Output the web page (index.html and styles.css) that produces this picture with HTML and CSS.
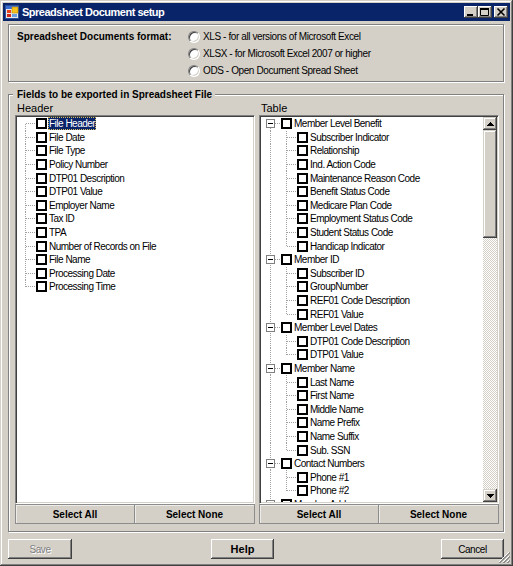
FILE: index.html
```html
<!DOCTYPE html>
<html>
<head>
<meta charset="utf-8">
<title>Spreadsheet Document setup</title>
<link rel="stylesheet" href="styles.css">
</head>
<body>
<div class="window">
  <div class="titlebar">
    <svg class="app-icon" width="14" height="14" viewBox="0 0 14 14">
      <rect x="0.5" y="0.5" width="13" height="13" fill="#e8e8e8" stroke="#2a4f9c"/>
      <rect x="1" y="1" width="12" height="3" fill="#3b6fd1"/>
      <rect x="7" y="2" width="6" height="6" fill="#f6c21b" stroke="#c08a00" stroke-width="0.6"/>
      <rect x="2" y="5" width="4" height="3" fill="#e8401c"/>
      <rect x="2" y="9" width="4" height="3" fill="#d0281a"/>
      <rect x="7" y="9" width="5" height="3" fill="#6aa0e0"/>
    </svg>
    <span class="title">Spreadsheet Document setup</span>
    <div class="caption-btns">
      <span class="cbtn"><svg width="14" height="12" viewBox="0 0 14 12"><rect x="3" y="8" width="6" height="2" fill="#000"/></svg></span>
      <span class="cbtn"><svg width="14" height="12" viewBox="0 0 14 12"><path d="M2.5 2.5h8v7h-8z" fill="none" stroke="#000"/><rect x="2" y="2" width="9" height="2" fill="#000"/></svg></span>
      <span class="cbtn close"><svg width="14" height="12" viewBox="0 0 14 12"><path d="M3.5 2.5L10.5 9.5M10.5 2.5L3.5 9.5" stroke="#000" stroke-width="1.6"/></svg></span>
    </div>
  </div>

  <div class="client">
    <div class="group format">
      <div class="fmt-label">Spreadsheet Documents format:</div>
      <div class="radios">
        <div class="radio-row"><span class="radio"></span><span class="radio-text">XLS - for all versions of Microsoft Excel</span></div>
        <div class="radio-row"><span class="radio"></span><span class="radio-text">XLSX - for Microsoft Excel 2007 or higher</span></div>
        <div class="radio-row"><span class="radio"></span><span class="radio-text">ODS - Open Document Spread Sheet</span></div>
      </div>
    </div>

    <div class="group fields">
      <div class="group-title">Fields to be exported in Spreadsheet File</div>
      <div class="cols">
        <div class="panel">
          <div class="panel-label">Header</div>
          <div class="tree">
            <div class="tree-body htree">
              <div class="node first"><span class="cb"></span><span class="lbl sel">File Header</span></div>
              <div class="node"><span class="cb"></span><span class="lbl">File Date</span></div>
              <div class="node"><span class="cb"></span><span class="lbl">File Type</span></div>
              <div class="node"><span class="cb"></span><span class="lbl">Policy Number</span></div>
              <div class="node"><span class="cb"></span><span class="lbl">DTP01 Description</span></div>
              <div class="node"><span class="cb"></span><span class="lbl">DTP01 Value</span></div>
              <div class="node"><span class="cb"></span><span class="lbl">Employer Name</span></div>
              <div class="node"><span class="cb"></span><span class="lbl">Tax ID</span></div>
              <div class="node"><span class="cb"></span><span class="lbl">TPA</span></div>
              <div class="node"><span class="cb"></span><span class="lbl">Number of Records on File</span></div>
              <div class="node"><span class="cb"></span><span class="lbl">File Name</span></div>
              <div class="node"><span class="cb"></span><span class="lbl">Processing Date</span></div>
              <div class="node last"><span class="cb"></span><span class="lbl">Processing Time</span></div>
            </div>
          </div>
          <div class="tree-actions">
            <button class="flat-btn">Select All</button>
            <button class="flat-btn">Select None</button>
          </div>
        </div>

        <div class="panel">
          <div class="panel-label">Table</div>
          <div class="tree">
            <div class="tree-body">
              <div class="pnode first"><span class="exp"></span><span class="cb"></span><span class="lbl">Member Level Benefit</span></div>
              <div class="cnode"><span class="cb"></span><span class="lbl">Subscriber Indicator</span></div>
              <div class="cnode"><span class="cb"></span><span class="lbl">Relationship</span></div>
              <div class="cnode"><span class="cb"></span><span class="lbl">Ind. Action Code</span></div>
              <div class="cnode"><span class="cb"></span><span class="lbl">Maintenance Reason Code</span></div>
              <div class="cnode"><span class="cb"></span><span class="lbl">Benefit Status Code</span></div>
              <div class="cnode"><span class="cb"></span><span class="lbl">Medicare Plan Code</span></div>
              <div class="cnode"><span class="cb"></span><span class="lbl">Employment Status Code</span></div>
              <div class="cnode"><span class="cb"></span><span class="lbl">Student Status Code</span></div>
              <div class="cnode last"><span class="cb"></span><span class="lbl">Handicap Indicator</span></div>
              <div class="pnode"><span class="exp"></span><span class="cb"></span><span class="lbl">Member ID</span></div>
              <div class="cnode"><span class="cb"></span><span class="lbl">Subscriber ID</span></div>
              <div class="cnode"><span class="cb"></span><span class="lbl">GroupNumber</span></div>
              <div class="cnode"><span class="cb"></span><span class="lbl">REF01 Code Description</span></div>
              <div class="cnode last"><span class="cb"></span><span class="lbl">REF01 Value</span></div>
              <div class="pnode"><span class="exp"></span><span class="cb"></span><span class="lbl">Member Level Dates</span></div>
              <div class="cnode"><span class="cb"></span><span class="lbl">DTP01 Code Description</span></div>
              <div class="cnode last"><span class="cb"></span><span class="lbl">DTP01 Value</span></div>
              <div class="pnode"><span class="exp"></span><span class="cb"></span><span class="lbl">Member Name</span></div>
              <div class="cnode"><span class="cb"></span><span class="lbl">Last Name</span></div>
              <div class="cnode"><span class="cb"></span><span class="lbl">First Name</span></div>
              <div class="cnode"><span class="cb"></span><span class="lbl">Middle Name</span></div>
              <div class="cnode"><span class="cb"></span><span class="lbl">Name Prefix</span></div>
              <div class="cnode"><span class="cb"></span><span class="lbl">Name Suffix</span></div>
              <div class="cnode last"><span class="cb"></span><span class="lbl">Sub. SSN</span></div>
              <div class="pnode"><span class="exp"></span><span class="cb"></span><span class="lbl">Contact Numbers</span></div>
              <div class="cnode"><span class="cb"></span><span class="lbl">Phone #1</span></div>
              <div class="cnode last"><span class="cb"></span><span class="lbl">Phone #2</span></div>
              <div class="pnode"><span class="exp"></span><span class="cb"></span><span class="lbl">Member Address</span></div>
            </div>
            <div class="scrollbar">
              <span class="sb-btn"><svg width="7" height="4" viewBox="0 0 7 4"><path d="M3 0h1v1h1v1h1v1h1v1H0V3h1V2h1V1h1z" fill="#000"/></svg></span>
              <span class="sb-thumb"></span>
              <span class="sb-track"></span>
              <span class="sb-btn"><svg width="7" height="4" viewBox="0 0 7 4"><path d="M0 0h7v1H6v1H5v1H4v1H3V3H2V2H1V1H0z" fill="#000"/></svg></span>
            </div>
          </div>
          <div class="tree-actions">
            <button class="flat-btn">Select All</button>
            <button class="flat-btn">Select None</button>
          </div>
        </div>
      </div>
    </div>

    <div class="footer">
      <button class="btn disabled">Save</button>
      <button class="btn help">Help</button>
      <button class="btn cancel">Cancel</button>
    </div>
  </div>

  <svg class="grip" width="12" height="12" viewBox="0 0 12 12">
    <path d="M11 1L1 11M11 5L5 11M11 9L9 11" stroke="#fff" stroke-width="1"/>
    <path d="M12 1L1 12M12 2L2 12M12 5L5 12M12 6L6 12M12 9L9 12M12 10L10 12" stroke="#808080" stroke-width="0.8"/>
  </svg>
</div>
</body>
</html>
```

FILE: styles.css
```css
:root {
  --face: #d4d0c8;
  --vdot: repeating-linear-gradient(to bottom, #a0a0a0 0 1px, transparent 1px 2px);
  --hdot: repeating-linear-gradient(to right, #a0a0a0 0 1px, transparent 1px 2px);
}

* { box-sizing: border-box; }

html, body {
  margin: 0;
  padding: 0;
  background: var(--face);
}

body {
  font-family: "Liberation Sans", Arial, sans-serif;
  font-size: 10px;
  color: #000;
}

.window {
  position: relative;
  width: 513px;
  height: 566px;
  padding: 3px;
  background: var(--face);
  box-shadow: inset -1px -1px 0 #404040, inset 1px 1px 0 var(--face),
              inset -2px -2px 0 #808080, inset 2px 2px 0 #fff;
}

/* ---------- title bar ---------- */
.titlebar {
  height: 18px;
  background: #0a246a;
  display: flex;
  align-items: center;
  padding-left: 1px;
}

.app-icon { margin: 0 3px 0 1px; flex: none; }

.title {
  color: #fff;
  font-weight: bold;
  font-size: 11px;
  letter-spacing: -0.5px;
  white-space: nowrap;
}

.caption-btns {
  margin-left: auto;
  display: flex;
  padding-right: 2px;
}

.cbtn {
  width: 14px;
  height: 12px;
  background: var(--face);
  box-shadow: inset -1px -1px 0 #404040, inset 1px 1px 0 #fff,
              inset -2px -2px 0 #808080, inset 2px 2px 0 var(--face);
  display: block;
}
.cbtn svg { display: block; }
.cbtn.close { margin-left: 2px; }

/* ---------- client ---------- */
.client {
  padding: 0 6px 0 5px;
}

.group {
  border: 1px solid #808080;
  box-shadow: 1px 1px 0 #fff, inset 1px 1px 0 #fff;
}

.format {
  margin-top: 3px;
  height: 58px;
  display: flex;
  padding: 3px 0 0 8px;
}

.fmt-label {
  width: 171px;
  font-weight: bold;
  line-height: 17px;
  white-space: nowrap;
}

.radio-row {
  height: 17px;
  display: flex;
  align-items: center;
}

.radio {
  width: 12px;
  height: 12px;
  border-radius: 50%;
  background: #fff;
  border: 1px solid;
  border-color: #808080 #fff #fff #808080;
  box-shadow: inset 1px 1px 0 #404040, inset -1px -1px 0 var(--face);
  margin-right: 3px;
  flex: none;
}

.radio-text {
  letter-spacing: -0.4px;
  white-space: nowrap;
}

.fields {
  margin-top: 12px;
  padding: 0 4px 7px 6px;
}

.group-title {
  width: fit-content;
  margin: -6px 0 0 -2px;
  padding: 0 3px 0 4px;
  background: var(--face);
  font-weight: bold;
  line-height: 12px;
  white-space: nowrap;
}

.cols {
  display: grid;
  grid-template-columns: 240px 240px;
  column-gap: 4px;
}

.panel-label {
  font-size: 11px;
  line-height: 14px;
  padding-left: 2px;
}

/* ---------- tree ---------- */
.tree {
  height: 389px;
  background: #fff;
  border: 1px solid;
  border-color: #808080 #fff #fff #808080;
  padding: 1px;
  box-shadow: inset 1px 1px 0 #404040, inset -1px -1px 0 var(--face);
  display: flex;
}

.tree-body {
  flex: 1;
  overflow: hidden;
  background: #fff;
}

.node, .pnode, .cnode {
  height: 13.6px;
  display: flex;
  align-items: center;
  background-repeat: no-repeat;
  white-space: nowrap;
}

.htree .node {
  padding-left: 19px;
  background-image: var(--vdot), var(--hdot);
  background-size: 1px 100%, 10px 1px;
  background-position: 8px 0, 9px 50%;
}
.htree .node.first {
  background-size: 1px 50%, 10px 1px;
  background-position: 8px 100%, 9px 50%;
}
.htree .node.last {
  background-size: 1px 50%, 10px 1px;
  background-position: 8px 0, 9px 50%;
}

.pnode {
  padding-left: 5px;
  background-image: var(--vdot), var(--hdot);
  background-size: 1px 100%, 5px 1px;
  background-position: 9px 0, 14px 50%;
}
.pnode.first {
  background-size: 1px 50%, 5px 1px;
  background-position: 9px 100%, 14px 50%;
}

.cnode {
  padding-left: 36px;
  background-image: var(--vdot), var(--vdot), var(--hdot);
  background-size: 1px 100%, 1px 100%, 10px 1px;
  background-position: 9px 0, 25px 0, 26px 50%;
}
.cnode.last {
  background-size: 1px 100%, 1px 50%, 10px 1px;
  background-position: 9px 0, 25px 0, 26px 50%;
}

.exp {
  width: 9px;
  height: 9px;
  border: 1px solid #808080;
  background: linear-gradient(#000, #000) center / 5px 1px no-repeat, #fff;
  margin-right: 6px;
  flex: none;
}

.cb {
  width: 11px;
  height: 11px;
  border: 2px solid #000;
  background: #fff;
  margin-right: 1px;
  flex: none;
}

.lbl {
  line-height: 13px;
  padding: 0 1px;
  letter-spacing: -0.5px;
}

.lbl.sel {
  background: #0a246a;
  color: #fff;
  outline: 1px dotted #d8c060;
  outline-offset: -1px;
}

/* ---------- scrollbar ---------- */
.scrollbar {
  width: 14px;
  flex: none;
  display: flex;
  flex-direction: column;
  background: repeating-conic-gradient(#fff 0 25%, var(--face) 0 50%) 0 0 / 2px 2px;
}

.sb-btn, .sb-thumb {
  background: var(--face);
  box-shadow: inset -1px -1px 0 #404040, inset 1px 1px 0 var(--face),
              inset -2px -2px 0 #808080, inset 2px 2px 0 #fff;
}

.sb-btn {
  height: 13px;
  display: flex;
  align-items: center;
  justify-content: center;
}
.sb-btn svg { display: block; }

.sb-thumb { height: 108px; }
.sb-track { flex: 1; }

/* ---------- panel buttons ---------- */
.tree-actions {
  display: flex;
  height: 20px;
}

.flat-btn {
  width: 120px;
  height: 20px;
  margin: 0;
  padding: 0;
  font-family: inherit;
  font-size: 10px;
  font-weight: bold;
  color: #000;
  background: var(--face);
  border: 1px solid #8c8c8c;
  box-shadow: inset 1px 1px 0 #eeece8;
}
.flat-btn + .flat-btn { border-left: 0; }

/* ---------- footer ---------- */
.footer {
  display: flex;
  margin-top: 7px;
}

.btn {
  width: 64px;
  height: 20px;
  margin: 0;
  padding: 0;
  border: 0;
  font-family: inherit;
  font-size: 10px;
  letter-spacing: -0.4px;
  color: #000;
  background: var(--face);
  box-shadow: inset -1px -1px 0 #404040, inset 1px 1px 0 #fff,
              inset -2px -2px 0 #808080, inset 2px 2px 0 var(--face);
}

.btn.disabled {
  color: #808080;
  text-shadow: 1px 1px 0 #fff;
}

.btn.help {
  margin-left: 139px;
  width: 63px;
  font-weight: bold;
  font-size: 11px;
  letter-spacing: 0;
}

.btn.cancel {
  margin-left: auto;
  width: 63px;
}

.grip {
  position: absolute;
  right: 3px;
  bottom: 3px;
}
```
